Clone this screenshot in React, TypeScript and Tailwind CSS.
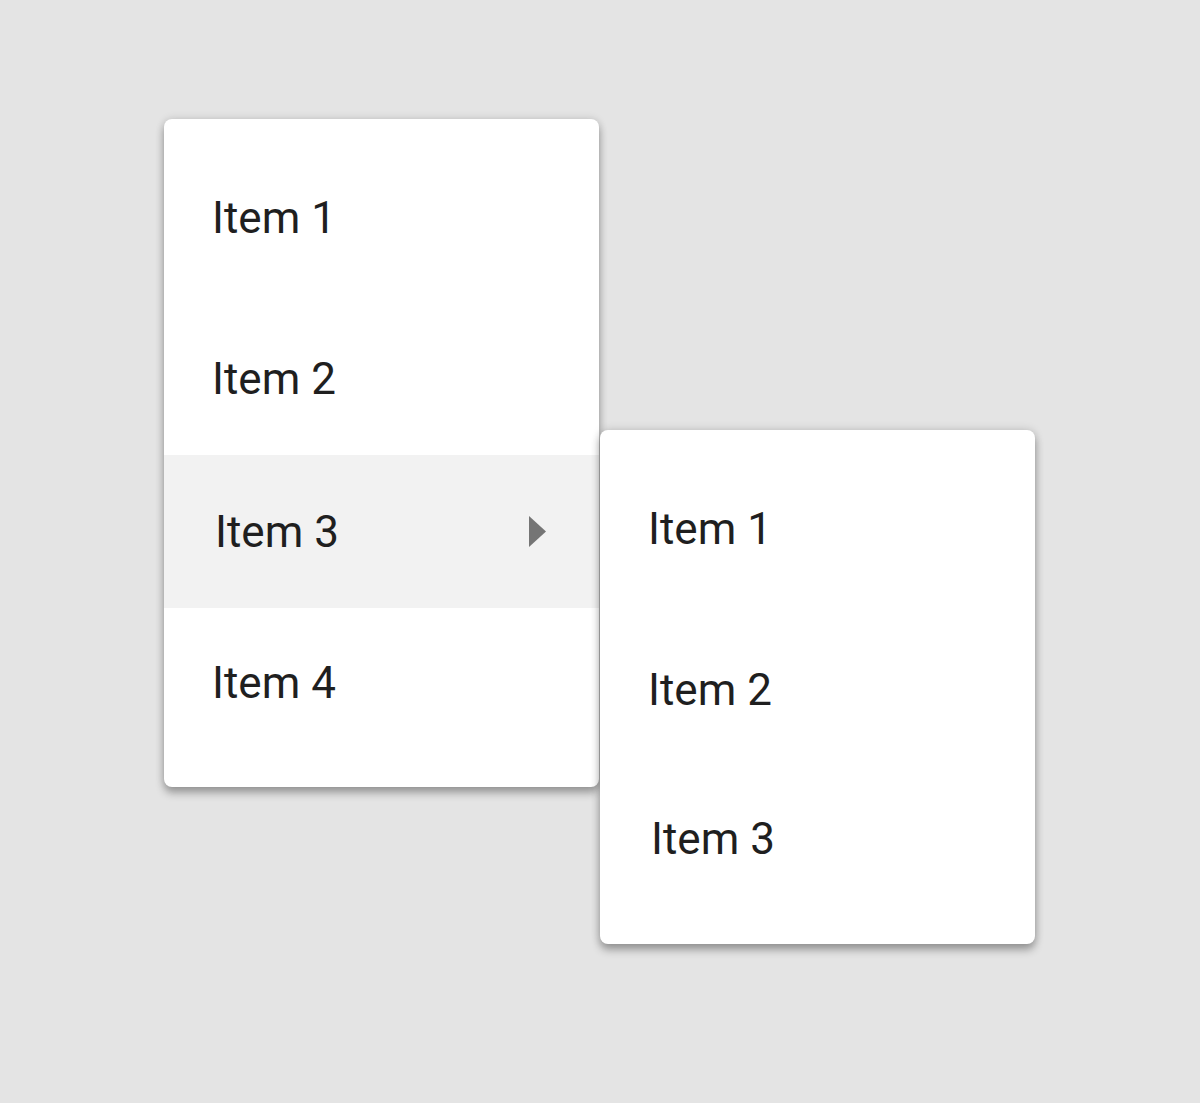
const Arrow = () => (
  <svg width="17" height="31" viewBox="0 0 17 31" className="block">
    <polygon points="0,0 17,15.5 0,31" fill="#757575" />
  </svg>
)

const App = () => {
  return (
    <div className="min-h-[1103px] w-full bg-[#e4e4e4] pl-[164px] pt-[119px] font-['Roboto',sans-serif] text-[#1f1f1f]">
      <div className="flex items-start">
        {/* main menu */}
        <div className="relative z-0 flex w-[435px] flex-col rounded-lg bg-white pb-[29px] pt-[23px] shadow-[0_6px_9px_rgba(0,0,0,0.3),0_0_8px_rgba(0,0,0,0.14)]">
          <div className="flex h-[152px] items-center pl-[48px] text-[44px]">Item 1</div>
          <div className="mt-[8px] flex h-[153px] items-center pl-[48px] text-[44px]">Item 2</div>
          <div className="flex h-[153px] items-center justify-between bg-[#f2f2f2] pl-[51px] pr-[53px] text-[44px]">
            <span>Item 3</span>
            <Arrow />
          </div>
          <div className="flex h-[150px] items-center pl-[48px] text-[44px]">Item 4</div>
        </div>

        {/* submenu */}
        <div className="relative z-10 ml-px mt-[311px] flex w-[435px] flex-col rounded-lg bg-white pb-[32px] pt-[23px] shadow-[0_6px_9px_rgba(0,0,0,0.3),0_0_10px_rgba(0,0,0,0.16)]">
          <div className="flex h-[152px] items-center pl-[48px] text-[44px]">Item 1</div>
          <div className="mt-[8px] flex h-[153px] items-center pl-[48px] text-[44px]">Item 2</div>
          <div className="flex h-[146px] items-center pl-[51px] text-[44px]">Item 3</div>
        </div>
      </div>
    </div>
  )
}

export default App
